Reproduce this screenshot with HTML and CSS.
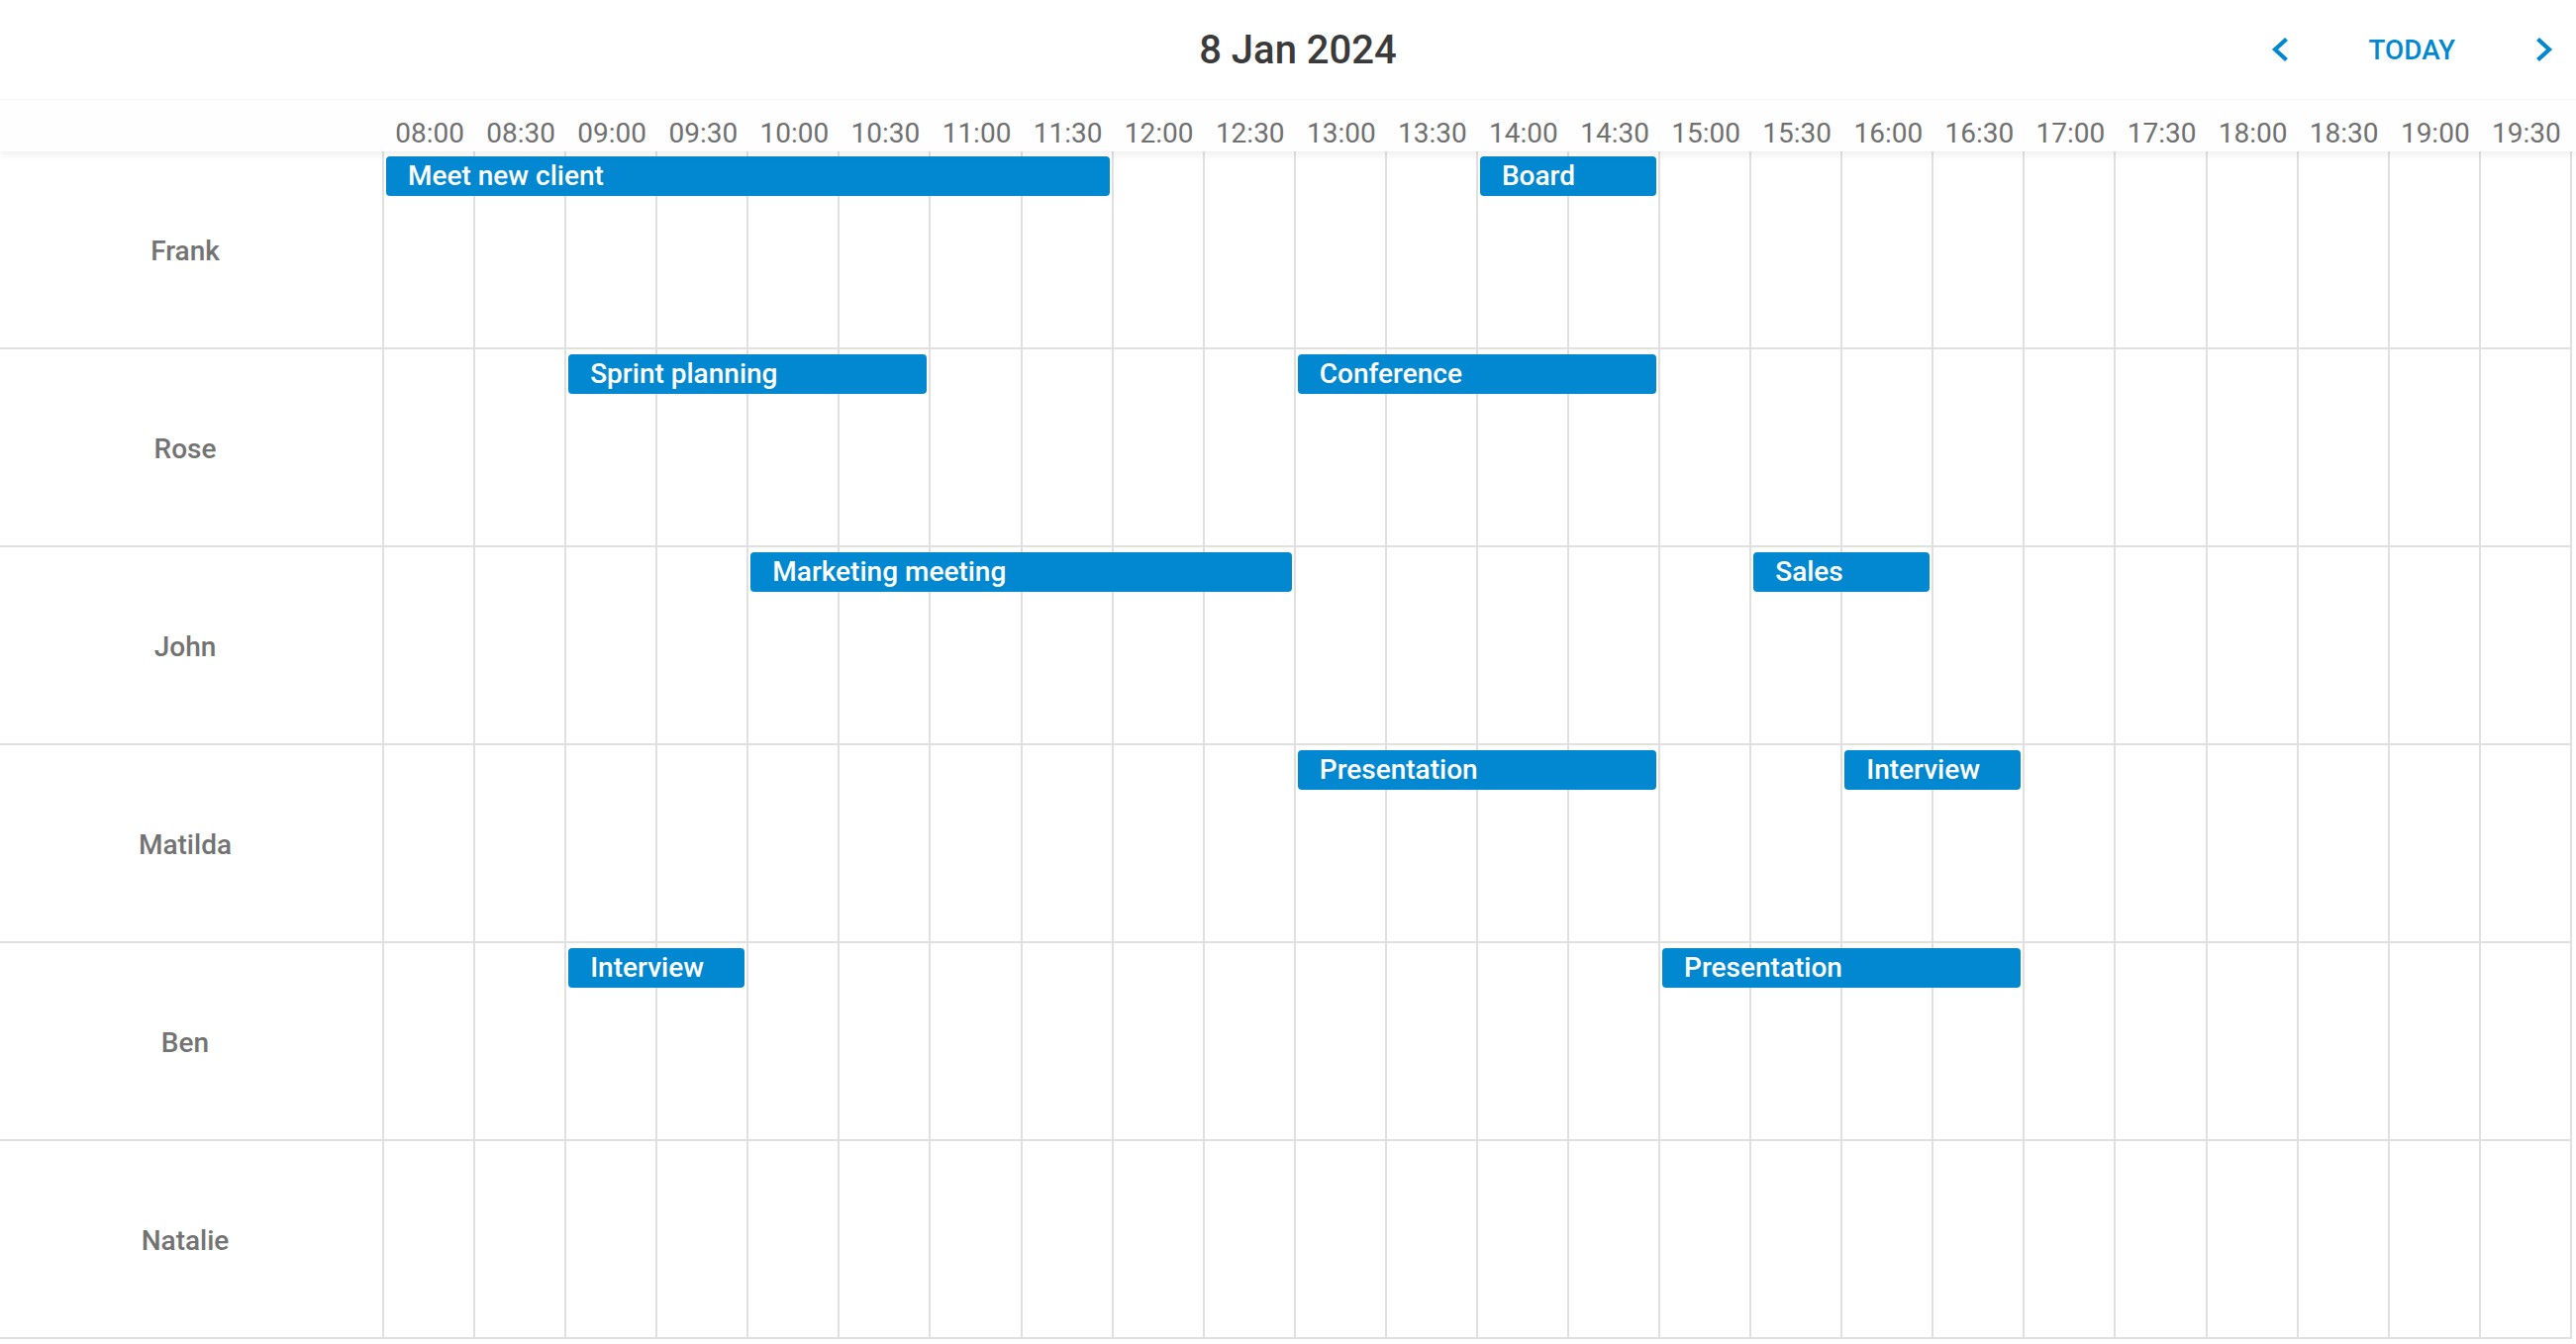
FILE: index.html
```html
<!DOCTYPE html>
<html lang="en">
<head>
<meta charset="utf-8">
<title>Timeline</title>
<link rel="stylesheet" href="styles.css">
</head>
<body>
<div class="scheduler">
  <div class="head">
    <div class="toolbar">
      <div class="spacer"></div>
      <div class="title">8 Jan 2024</div>
      <div class="nav">
        <button class="nav-btn" aria-label="Previous">
          <svg width="18" height="26" viewBox="0 0 18 26"><polyline points="15.5,2.5 4,13 15.5,23.5" fill="none" stroke="#0288d1" stroke-width="4.2"/></svg>
        </button>
        <button class="today">TODAY</button>
        <button class="nav-btn" aria-label="Next">
          <svg width="18" height="26" viewBox="0 0 18 26"><polyline points="2.5,2.5 14,13 2.5,23.5" fill="none" stroke="#0288d1" stroke-width="4.2"/></svg>
        </button>
      </div>
    </div>
    <div class="times">
      <div class="corner"></div>
      <div class="t">08:00</div><div class="t">08:30</div><div class="t">09:00</div><div class="t">09:30</div>
      <div class="t">10:00</div><div class="t">10:30</div><div class="t">11:00</div><div class="t">11:30</div>
      <div class="t">12:00</div><div class="t">12:30</div><div class="t">13:00</div><div class="t">13:30</div>
      <div class="t">14:00</div><div class="t">14:30</div><div class="t">15:00</div><div class="t">15:30</div>
      <div class="t">16:00</div><div class="t">16:30</div><div class="t">17:00</div><div class="t">17:30</div>
      <div class="t">18:00</div><div class="t">18:30</div><div class="t">19:00</div><div class="t">19:30</div>
    </div>
  </div>

  <div class="rows">
    <div class="row">
      <div class="res">Frank</div>
      <div class="slots"><i></i><i></i><i></i><i></i><i></i><i></i><i></i><i></i><i></i><i></i><i></i><i></i><i></i><i></i><i></i><i></i><i></i><i></i><i></i><i></i><i></i><i></i><i></i><i></i></div>
      <div class="ev" style="grid-column: 2 / 10">Meet new client</div>
      <div class="ev" style="grid-column: 14 / 16">Board</div>
    </div>
    <div class="row">
      <div class="res">Rose</div>
      <div class="slots"><i></i><i></i><i></i><i></i><i></i><i></i><i></i><i></i><i></i><i></i><i></i><i></i><i></i><i></i><i></i><i></i><i></i><i></i><i></i><i></i><i></i><i></i><i></i><i></i></div>
      <div class="ev" style="grid-column: 4 / 8">Sprint planning</div>
      <div class="ev" style="grid-column: 12 / 16">Conference</div>
    </div>
    <div class="row">
      <div class="res">John</div>
      <div class="slots"><i></i><i></i><i></i><i></i><i></i><i></i><i></i><i></i><i></i><i></i><i></i><i></i><i></i><i></i><i></i><i></i><i></i><i></i><i></i><i></i><i></i><i></i><i></i><i></i></div>
      <div class="ev" style="grid-column: 6 / 12">Marketing meeting</div>
      <div class="ev" style="grid-column: 17 / 19">Sales</div>
    </div>
    <div class="row">
      <div class="res">Matilda</div>
      <div class="slots"><i></i><i></i><i></i><i></i><i></i><i></i><i></i><i></i><i></i><i></i><i></i><i></i><i></i><i></i><i></i><i></i><i></i><i></i><i></i><i></i><i></i><i></i><i></i><i></i></div>
      <div class="ev" style="grid-column: 12 / 16">Presentation</div>
      <div class="ev" style="grid-column: 18 / 20">Interview</div>
    </div>
    <div class="row">
      <div class="res">Ben</div>
      <div class="slots"><i></i><i></i><i></i><i></i><i></i><i></i><i></i><i></i><i></i><i></i><i></i><i></i><i></i><i></i><i></i><i></i><i></i><i></i><i></i><i></i><i></i><i></i><i></i><i></i></div>
      <div class="ev" style="grid-column: 4 / 6">Interview</div>
      <div class="ev" style="grid-column: 16 / 20">Presentation</div>
    </div>
    <div class="row">
      <div class="res">Natalie</div>
      <div class="slots"><i></i><i></i><i></i><i></i><i></i><i></i><i></i><i></i><i></i><i></i><i></i><i></i><i></i><i></i><i></i><i></i><i></i><i></i><i></i><i></i><i></i><i></i><i></i><i></i></div>
    </div>
  </div>
</div>
</body>
</html>
```
FILE: styles.css
```css
* { box-sizing: border-box; }

html, body {
  margin: 0;
  padding: 0;
  background: #ffffff;
}

body {
  font-family: Roboto, "Noto Sans", "Liberation Sans", sans-serif;
  width: 2602px;
  height: 1358px;
  overflow: hidden;
}

.scheduler {
  width: 2602px;
}

.head {
  position: relative;
  z-index: 2;
  background: #ffffff;
  box-shadow: 0 3px 8px rgba(0, 0, 0, 0.07);
}

.toolbar {
  height: 100px;
  display: grid;
  grid-template-columns: 1fr auto 1fr;
  align-items: center;
}

.title {
  padding-left: 20px;
  font-size: 40px;
  font-weight: 500;
  color: #3a3a3a;
  white-space: nowrap;
}

.nav {
  justify-self: end;
  display: flex;
  align-items: center;
  gap: 81px;
  padding-right: 23px;
}

.nav-btn,
.today {
  border: 0;
  background: transparent;
  padding: 0;
  margin: 0;
  font-family: inherit;
  cursor: pointer;
}

.nav-btn {
  width: 18px;
  height: 26px;
  display: flex;
  align-items: center;
  justify-content: center;
}

.nav-btn svg { display: block; }

.today {
  font-size: 27.8px;
  font-weight: 500;
  color: #0288d1;
}

.times {
  height: 53px;
  display: grid;
  grid-template-columns: 388px repeat(24, 92.08px);
  border-top: 1px solid #f7f7f7;
  background: #fefefe;
}

.t {
  padding-top: 17px;
  text-align: center;
  font-size: 28px;
  color: #707070;
  white-space: nowrap;
}

.rows {
  position: relative;
  z-index: 1;
}

.row {
  height: 200px;
  display: grid;
  grid-template-columns: 388px repeat(24, 92.08px);
  grid-template-rows: 198px;
  border-bottom: 2px solid #e0e0e0;
  width: 2598px;
}

.res {
  grid-column: 1;
  grid-row: 1;
  border-right: 2px solid #e0e0e0;
  display: flex;
  align-items: center;
  justify-content: center;
  padding-right: 12px;
  padding-top: 3px;
  font-size: 28px;
  font-weight: 500;
  color: #737373;
}

.slots {
  grid-column: 2 / -1;
  grid-row: 1;
  display: grid;
  grid-template-columns: repeat(24, 1fr);
}

.slots i {
  border-right: 2px solid #e0e0e0;
}

.ev {
  grid-row: 1;
  align-self: start;
  margin: 5px 4px 0 2px;
  height: 40px;
  line-height: 40px;
  padding-left: 22px;
  background: #0288d1;
  color: #ffffff;
  border-radius: 4px;
  font-size: 28px;
  font-weight: 500;
  white-space: nowrap;
  overflow: hidden;
}
```
